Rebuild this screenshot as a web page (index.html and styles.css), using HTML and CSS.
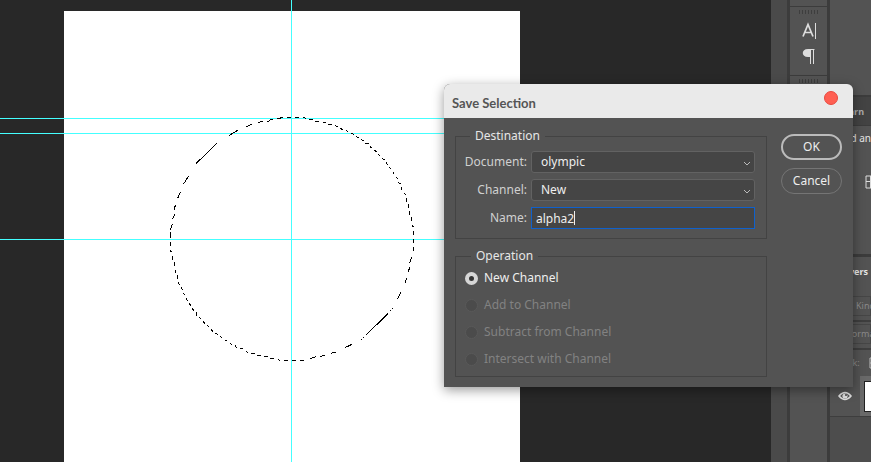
FILE: index.html
```
<!DOCTYPE html>
<html lang="en">
<head>
<meta charset="utf-8">
<title>Save Selection</title>
<link rel="stylesheet" href="styles.css">
</head>
<body>
<div class="app">
  <main class="workspace">
    <div class="artboard"></div>
    <div class="guide guide-h guide-top"></div>
    <div class="guide guide-h guide-upper"></div>
    <div class="guide guide-h guide-middle"></div>
    <div class="guide guide-v"></div>
    <svg class="selection" viewBox="0 0 780 795" aria-hidden="true">
      <path d="M380 37H390M352 42L368 37M328 46L338 43M321 48H327M295 52L308 49M257 67L275 58M208 91L233 76M109 175L170 115M70 238L86 213M53 280L61 262M43 314L46 300M37 343L44 328M31 375L37 358M31 382V390"/>
      <path transform="translate(390 0)" d="M0 37H3M15 37H27M39 37L48 40M57 43H69M75 49H87M99 52H108M114 58H126M135 61L143 65M150 69L158 74M168 76L174 80M183 85L191 88M198 94L206 98M213 103L221 107M225 115H237M240 124L245 129M252 135L260 140M264 148L269 152M276 160L284 164M288 172L293 179M297 186L302 191M310 201V207M318 216L323 222M324 232L332 237M334 246V255M343 265L347 270M349 280V291M355 297V309M358 318V330M364 336V347M367 361L370 366M370 378V390"/>
      <path transform="translate(0 390)" d="M31 0V9M31 20V33M31 45L34 52M37 63V75M43 81V93M46 105V114M52 120V132M55 141L58 149M63 157L68 164M70 174L74 179M79 189L82 197M88 205L92 212M97 220L101 227M109 231V242M118 246L122 251M130 259L134 266M142 270L146 275M154 283L158 290M166 294L173 299M181 304L186 308M195 316H201M210 324L215 329M225 332L231 339M240 340H249M258 348L264 353M273 355H285M291 361H303M312 364H324M330 370H342M354 373L360 376M372 376H384"/>
      <path transform="translate(390 390)" d="M6 376H18M30 376H42M60 371L78 365M90 364L105 361M123 355L138 351M165 338L186 328M213 314L216 312M219 308L222 306M228 300L294 236M300 227L303 225M306 222L309 219M322 192L332 172M346 143L350 129M355 110L359 97M359 83L365 66M370 36V48M370 12V24"/>
    </svg>
  </main>
  <div class="scroll-gutter"></div>
  <aside class="tool-dock">
    <div class="dock-cap"></div>
    <section class="dock-group">
      <div class="grip"></div>
      <svg class="dock-icon" viewBox="0 0 16 18" aria-hidden="true"><path d="M2 14.500L7 2.500L12 14.500M3.500 10.500H10.500" fill="none" stroke="#ddd" stroke-width="1.7"/><path d="M14.500 1V17" stroke="#ddd"/></svg>
      <svg class="dock-icon" viewBox="0 0 16 18" aria-hidden="true"><path d="M9 1H7C0 1 0 9 7 9H9Z" fill="#ddd"/><path d="M7 1.500H13.500M9.500 1V16M12.500 1V16" fill="none" stroke="#ddd"/></svg>
    </section>
    <section class="dock-group dock-rest"><div class="grip"></div></section>
  </aside>
  <aside class="panels">
    <section class="panel-blank"></section>
    <section class="panel-learn">
      <h2 class="tab">Learn</h2>
      <p class="hint">Add an</p>
      <svg class="grid-icon" viewBox="0 0 14 14" aria-hidden="true"><path d="M1 1H13V13H1ZM5.500 1V13M1 6.500H13" fill="#555" stroke="#ddd"/></svg>
    </section>
    <section class="panel-layers">
      <h2 class="layers-title">Layers</h2>
      <div class="filter"><span class="kind">Kind</span></div>
      <div class="filter"><span class="blend">Normal</span></div>
      <div class="lock"><span>Lock:</span><svg class="lock-icon" viewBox="0 0 12 12" aria-hidden="true"><path d="M1 1H11V11H1ZM1 6H6V1M6 6V11" fill="none" stroke="#bbb"/></svg></div>
      <div class="layer">
        <svg class="eye" viewBox="0 0 14 10" aria-hidden="true"><path d="M1 5Q7-2 13 5Q7 12 1 5Z" fill="#555" stroke="#ddd" stroke-width="1.600"/><circle cx="7" cy="5" r="2.600" fill="#ddd"/><circle cx="8" cy="4" r="1" fill="#444"/></svg>
        <div class="thumb-cell"><div class="thumb"></div></div>
      </div>
    </section>
  </aside>
</div>

<form class="dialog" role="dialog" aria-labelledby="dialog-title">
  <header class="titlebar">
    <h1 id="dialog-title">Save Selection</h1>
    <button class="close" type="button" aria-label="Close"></button>
  </header>
  <div class="dialog-body">
    <div class="groups">
      <fieldset class="group destination">
        <legend>Destination</legend>
        <label for="document">Document:</label>
        <div class="select-wrap">
          <select id="document"><option>olympic</option></select>
          <svg class="chevron" viewBox="0 0 8 5" aria-hidden="true"><path d="M1 1L4 4L7 1"/></svg>
        </div>
        <label for="channel">Channel:</label>
        <div class="select-wrap">
          <select id="channel"><option>New</option></select>
          <svg class="chevron" viewBox="0 0 8 5" aria-hidden="true"><path d="M1 1L4 4L7 1"/></svg>
        </div>
        <label for="name">Name:</label>
        <div class="select-wrap">
          <input class="name" id="name" type="text" value="alpha2">
          <div class="caret"></div>
        </div>
      </fieldset>
      <fieldset class="group operation">
        <legend>Operation</legend>
        <label><input type="radio" name="op" checked>New Channel</label>
        <label class="off"><input type="radio" name="op" disabled>Add to Channel</label>
        <label class="off"><input type="radio" name="op" disabled>Subtract from Channel</label>
        <label class="off"><input type="radio" name="op" disabled>Intersect with Channel</label>
      </fieldset>
    </div>
    <div class="actions">
      <button class="btn primary" type="submit">OK</button>
      <button class="btn" type="button">Cancel</button>
    </div>
  </div>
</form>
</body>
</html>
```
FILE: styles.css
```
* { box-sizing: border-box; }

body {
  margin: 0;
  height: 100vh;
  overflow: hidden;
  position: relative;
  background: #535353;
  color: #e6e6e6;
  font: 12px/16px "Noto Sans", "Liberation Sans", sans-serif;
}

h1, h2, p { margin: 0; }

.app { display: flex; height: 100%; }

/* Canvas */
.workspace {
  flex: 1;
  position: relative;
  background: #282828;
  overflow: hidden;
}
.artboard { position: absolute; left: 64px; top: 11px; bottom: 0; width: 456px; background: #fff; }
.guide { position: absolute; background: #4ff; }
.guide-h { left: 0; right: 0; height: 1px; }
.guide-v { top: 0; bottom: 0; left: 291px; width: 1px; }
.guide-top { top: 118px; }
.guide-upper { top: 133px; }
.guide-middle { top: 239px; }
.selection { position: absolute; left: 160px; top: 105px; width: 260px; height: 265px; shape-rendering: crispEdges; }
.selection path { fill: none; stroke: #000; stroke-width: 3; }

/* Docks */
.scroll-gutter { width: 16px; background: #4a4a4a; }
.tool-dock {
  width: 43px;
  display: flex;
  flex-direction: column;
  border-left: 3px solid #3c3c3c;
  border-right: 3px solid #3c3c3c;
}
.dock-cap { height: 7px; border-bottom: 1px solid #3c3c3c; }
.dock-group { display: flex; flex-direction: column; align-items: center; height: 68px; gap: 8px; padding-top: 3px; }
.dock-rest { flex: 1; border-top: 1px solid #3c3c3c; }
.grip { width: 20px; height: 4px; background: repeating-linear-gradient(90deg, #3e3e3e 0 1px, #535353 1px 3px); }
.dock-icon { width: 16px; height: 18px; flex: none; }

.panels { width: 41px; display: flex; flex-direction: column; overflow: hidden; }
.panel-blank { height: 97px; border-bottom: 2px solid #3c3c3c; }
.panel-learn {
  height: 160px;
  display: flex;
  flex-direction: column;
  align-items: flex-end;
  border-bottom: 3px solid #3c3c3c;
}
.tab {
  align-self: stretch;
  height: 29px;
  padding: 7px 7px 0 0;
  background: #434343;
  border-bottom: 1px solid #3c3c3c;
  color: #aaa;
  font-size: 9px;
  line-height: 16px;
  text-align: right;
}
.hint { padding-top: 4px; font-size: 10px; line-height: 16px; }
.grid-icon { width: 14px; height: 14px; margin: 29px -8px 0 0; flex: none; }

.panel-layers { flex: 1; display: flex; flex-direction: column; background: #4d4d4d; font-size: 9px; }
.layers-title { height: 37px; padding: 7px 3px 0 0; font-size: 9px; line-height: 16px; text-align: right; background: #535353; }
.filter {
  height: 28px;
  padding: 2px 0;
  border-bottom: 2px solid #3e3e3e;
  color: #8a8a8a;
  background: #535353;
  overflow: hidden;
  white-space: nowrap;
}
.filter span { display: block; height: 20px; border: 1px solid #464646; line-height: 18px; }
.kind { padding-left: 25px; }
.blend { padding-left: 14px; }
.lock { display: flex; align-items: center; gap: 9px; height: 26px; padding-left: 8px; background: #535353; color: #8a8a8a; }
.lock-icon { width: 12px; height: 12px; flex: none; }
.layer { display: flex; align-items: center; height: 41px; padding-left: 8px; gap: 8px; background: #535353; border-bottom: 1px solid #3e3e3e; }
.eye { width: 14px; height: 10px; flex: none; }
.thumb-cell { flex: none; width: 44px; height: 40px; padding: 5px 4px; background: #696969; }
.thumb { height: 31px; border: 1px solid #222; background: #fff; }

/* Dialog */
.dialog {
  position: absolute;
  left: 444px;
  top: 84px;
  right: 18px;
  background: #535353;
  border-radius: 6px 6px 0 0;
  box-shadow: 0 3px 12px rgba(0, 0, 0, .4);
}
.titlebar {
  display: flex;
  justify-content: space-between;
  align-items: center;
  height: 34px;
  padding: 0 15px 0 8px;
  border-radius: 6px 6px 0 0;
  background: #eaeaea;
}
.titlebar h1 { color: #555; font: bold 13px/16px Lato, "Noto Sans", sans-serif; padding-top: 4px; }
.close { width: 14px; height: 14px; margin-bottom: 6px; padding: 0; border: 1px solid #e9493f; border-radius: 50%; background: #ff5f52; }

.dialog-body { display: flex; gap: 14px; padding: 10px 11px 10px; }
.groups { flex: 1; display: flex; flex-direction: column; gap: 9px; }
.group {
  min-width: 0;
  margin: 0;
  border: 1px solid #434343;
}
.group legend { padding: 0 5px; line-height: 16px; }
.destination {
  display: grid;
  grid-template-columns: 71px 1fr;
  grid-auto-rows: 22px;
  column-gap: 4px;
  row-gap: 6px;
  align-items: center;
  padding: 7px 11px 9px 0;
}
.destination legend { margin-left: 14px; }
.destination label { text-align: right; color: #d0d0d0; }
.select-wrap { position: relative; display: flex; height: 22px; }
.select-wrap select, .name {
  width: 100%;
  height: 22px;
  margin: 0;
  border: 1px solid #626262;
  border-radius: 3px;
  background: #454545;
  color: #eee;
  font: inherit;
  outline: none;
  appearance: none;
}
.select-wrap select { padding: 0 20px 0 9px; }
.select-wrap .name { padding: 0 4px; border-color: #0f61cd; border-radius: 0; }
.chevron { position: absolute; right: 4px; top: 10px; width: 8px; height: 5px; pointer-events: none; }
.chevron path { fill: none; stroke: #bbb; stroke-width: 1; }
.caret { position: absolute; left: 43px; top: 4px; width: 1px; height: 14px; background: #eee; }

.operation { display: flex; flex-direction: column; gap: 11px; padding: 6px 0 9px 9px; }
.operation legend { margin-left: 6px; }
.operation label { display: flex; align-items: center; gap: 6px; height: 16px; color: #eee; }
.operation .off { color: #828282; }
.operation input {
  appearance: none;
  width: 13px;
  height: 13px;
  margin: 0;
  border: 1px solid #595959;
  border-radius: 50%;
  background: #4b4b4b;
}
.operation input:checked { border: 4px solid #d6d6d6; background: #333; }

.actions { display: flex; flex-direction: column; gap: 8px; padding-top: 6px; }
.btn {
  width: 61px;
  height: 26px;
  padding: 0;
  border: 1px solid #757575;
  border-radius: 13px;
  background: #535353;
  color: #eee;
  font: inherit;
}
.btn.primary { border: 2px solid #bbb; }
```
